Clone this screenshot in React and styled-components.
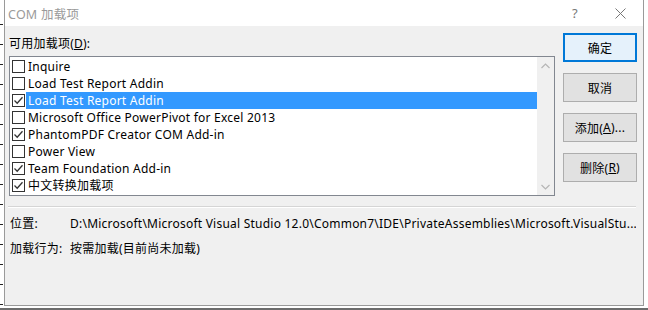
import styled, { createGlobalStyle } from 'styled-components'

const GlobalStyle = createGlobalStyle`
html, body {
    margin:0;
    padding:0;
}
body {
    width:648px;
    height:310px;
    overflow:hidden;
    background:#ffffff;
    font-family:"Noto Sans", "Noto Sans CJK SC", sans-serif;
    font-size:12px;
    letter-spacing:0.23px;
    color:#000;
}
`

const items = [
    { label: 'Inquire', checked: false },
    { label: 'Load Test Report Addin', checked: false },
    { label: 'Load Test Report Addin', checked: true, selected: true },
    { label: 'Microsoft Office PowerPivot for Excel 2013', checked: false },
    { label: 'PhantomPDF Creator COM Add-in', checked: true },
    { label: 'Power View', checked: false },
    { label: 'Team Foundation Add-in', checked: true },
    { label: '中文转换加载项', checked: true },
]

const Check = ({ checked }) => (
    <CheckBox>
        {checked && (
            <svg width="11" height="11" viewBox="0 0 11 11">
                <path d="M1.5 5.5 L4.2 8.2 L9.5 2.2" fill="none" stroke="#333" strokeWidth="1.3" />
            </svg>
        )}
    </CheckBox>
)

const App = () => {
    return (
        <>
            <GlobalStyle />
            <Desk>
                <Window>
                    <TitleBar>
                        <Title>COM 加载项</Title>
                        <TitleButtons>
                            <Help>?</Help>
                            <Close>
                                <svg width="11" height="11" viewBox="0 0 11 11">
                                    <path d="M0.5 0.5 L10.5 10.5 M10.5 0.5 L0.5 10.5" stroke="#777" strokeWidth="1" />
                                </svg>
                            </Close>
                        </TitleButtons>
                    </TitleBar>
                    <Body>
                        <Top>
                            <Left>
                                <Label>可用加载项(<u>D</u>):</Label>
                                <ListBox>
                                    <Rows>
                                        {items.map((it, i) => (
                                            <Row key={i}>
                                                <Check checked={it.checked} />
                                                <RowText $selected={it.selected}>{it.label}</RowText>
                                            </Row>
                                        ))}
                                    </Rows>
                                    <ScrollBar>
                                        <Arrow>
                                            <svg width="9" height="6" viewBox="0 0 9 6">
                                                <path d="M0.5 5 L4.5 1 L8.5 5" fill="none" stroke="#b5b5b5" strokeWidth="1.2" />
                                            </svg>
                                        </Arrow>
                                        <Arrow>
                                            <svg width="9" height="6" viewBox="0 0 9 6">
                                                <path d="M0.5 1 L4.5 5 L8.5 1" fill="none" stroke="#b5b5b5" strokeWidth="1.2" />
                                            </svg>
                                        </Arrow>
                                    </ScrollBar>
                                </ListBox>
                            </Left>
                            <Buttons>
                                <Button $primary>确定</Button>
                                <Button>取消</Button>
                                <Button>添加(<u>A</u>)...</Button>
                                <Button>删除(<u>R</u>)</Button>
                            </Buttons>
                        </Top>
                        <Separator />
                        <Info>
                            <InfoRow>
                                <InfoLabel>位置:</InfoLabel>
                                <InfoValue>D:\Microsoft\Microsoft Visual Studio 12.0\Common7\IDE\PrivateAssemblies\Microsoft.VisualStu...</InfoValue>
                            </InfoRow>
                            <InfoRow>
                                <InfoLabel>加载行为:</InfoLabel>
                                <InfoValue>按需加载(目前尚未加载)</InfoValue>
                            </InfoRow>
                        </Info>
                    </Body>
                </Window>
            </Desk>
        </>
    )
}

export default App

const Desk = styled.div`
width:648px;
height:310px;
padding-left:4px;
box-sizing:border-box;
background:
    linear-gradient(#fff, #fff) 4px 0 / 644px 310px no-repeat,
    repeating-linear-gradient(to bottom, transparent 0, transparent 19px, #222 19px, #222 20px) 0 5px / 3px 310px no-repeat,
    #fff;
border-bottom:2px solid #6d6d6d;
`

const Window = styled.div`
width:640px;
height:306px;
box-sizing:border-box;
border:1px solid #9a9a9a;
border-top:none;
background:#f0f0f0;
display:flex;
flex-direction:column;
`

const TitleBar = styled.div`
height:26px;
background:#fff;
display:flex;
align-items:center;
justify-content:space-between;
padding:0 0 0 3px;
`

const Title = styled.div`
color:#9a9a9a;
font-size:12.5px;
`

const TitleButtons = styled.div`
display:flex;
align-items:center;
height:100%;
`

const Help = styled.div`
width:44px;
text-align:center;
color:#777;
font-size:13px;
`

const Close = styled.div`
width:46px;
display:flex;
justify-content:center;
align-items:center;
`

const Body = styled.div`
flex:1;
padding:0 6px 0 3px;
display:flex;
flex-direction:column;
`

const Top = styled.div`
display:flex;
justify-content:space-between;
`

const Left = styled.div`
display:flex;
flex-direction:column;
padding-left:1px;
`

const Label = styled.div`
height:17px;
line-height:17px;
margin-top:9px;
margin-bottom:4px;
u { text-decoration:underline; }
`

const ListBox = styled.div`
width:546px;
height:140px;
box-sizing:border-box;
border:1px solid #828790;
background:#fff;
display:flex;
`

const Rows = styled.div`
flex:1;
padding-top:1px;
display:flex;
flex-direction:column;
`

const Row = styled.div`
height:17px;
display:flex;
align-items:center;
padding-left:2px;
`

const CheckBox = styled.div`
width:13px;
height:13px;
box-sizing:border-box;
border:1px solid #333;
background:#fff;
display:flex;
align-items:center;
justify-content:center;
margin-right:1px;
flex-shrink:0;
`

const RowText = styled.div`
flex:1;
height:17px;
line-height:17px;
padding-left:2px;
white-space:nowrap;
background:${p => (p.$selected ? '#3399ff' : 'transparent')};
color:${p => (p.$selected ? '#fff' : '#000')};
`

const ScrollBar = styled.div`
width:17px;
background:#f0f0f0;
display:flex;
flex-direction:column;
justify-content:space-between;
`

const Arrow = styled.div`
height:17px;
display:flex;
align-items:center;
justify-content:center;
`

const Buttons = styled.div`
display:flex;
flex-direction:column;
gap:11px;
margin-top:7px;
`

const Button = styled.div`
width:74px;
height:29px;
box-sizing:border-box;
border:${p => (p.$primary ? '2px solid #0078d7' : '1px solid #adadad')};
background:${p => (p.$primary ? '#e5f1fb' : '#e1e1e1')};
display:flex;
align-items:center;
justify-content:center;
font-size:12px;
u { text-decoration:underline; }
`

const Separator = styled.div`
margin-top:10px;
margin-left:0;
width:628px;
height:1px;
background:#d5d5d5;
border-bottom:1px solid #fff;
`

const Info = styled.div`
display:flex;
flex-direction:column;
margin-top:7px;
gap:8px;
padding-left:2px;
`

const InfoRow = styled.div`
display:flex;
height:17px;
line-height:17px;
`

const InfoLabel = styled.div`
width:60px;
flex-shrink:0;
`

const InfoValue = styled.div`
white-space:nowrap;
overflow:hidden;
width:566px;
`
